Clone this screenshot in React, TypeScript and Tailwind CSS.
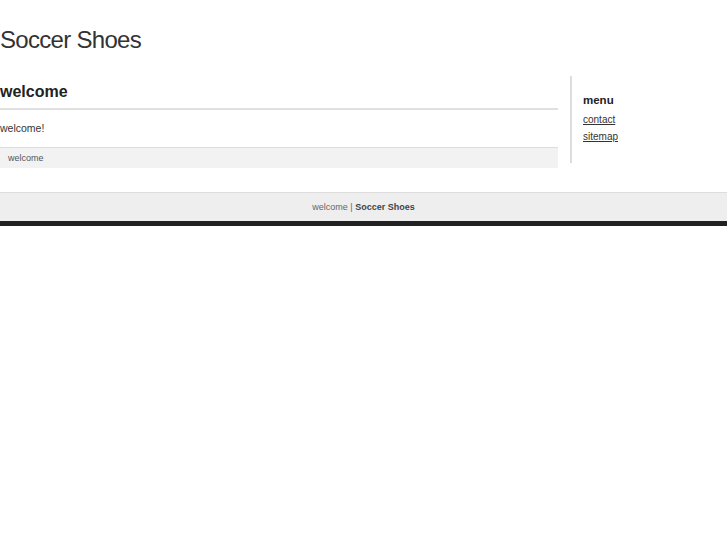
export default function App() {
  return (
    <div className="min-h-[545px] bg-white text-[#333]" style={{ fontFamily: '"Liberation Sans", Arial, sans-serif' }}>
      <header className="pt-[26px] pb-[22px]">
        <h1 className="text-[24px] leading-[28px] tracking-[-0.7px] text-[#333] font-normal">Soccer Shoes</h1>
      </header>
      <div className="flex">
        <div className="w-[558px] shrink-0">
          <h2 className="pt-[6px] pb-[6px] text-[16px] leading-[20px] font-bold text-[#222] border-b-2 border-[#e0e0e0]">welcome</h2>
          <p className="pt-[10px] pb-[11px] text-[10.5px] leading-[16px] text-[#333]">welcome!</p>
          <div className="h-[21px] border-t border-[#ddd] bg-[#f2f2f2] pl-[8px] text-[9px] leading-[20px] text-[#555]">welcome</div>
        </div>
        <div className="ml-[12px] self-start border-l-2 border-[#ddd] pl-[11px] pt-[17px] pb-[19px] flex-1">
          <h3 className="text-[11.5px] leading-[14px] font-bold text-[#222]">menu</h3>
          <a href="#" className="mt-[6px] block w-fit text-[10px] leading-[14px] text-[#333] underline">contact</a>
          <a href="#" className="mt-[3px] block w-fit text-[10px] leading-[14px] text-[#333] underline">sitemap</a>
        </div>
      </div>
      <footer className="mt-[24px] border-t border-[#ddd] bg-[#eee] border-b-[5px] border-b-[#222]">
        <div className="h-[28px] pt-[2px] flex items-center justify-center text-[9px] text-[#666]">
          <span>welcome&nbsp;|&nbsp;</span>
          <span className="font-bold text-[#444]">Soccer Shoes</span>
        </div>
      </footer>
    </div>
  );
}
